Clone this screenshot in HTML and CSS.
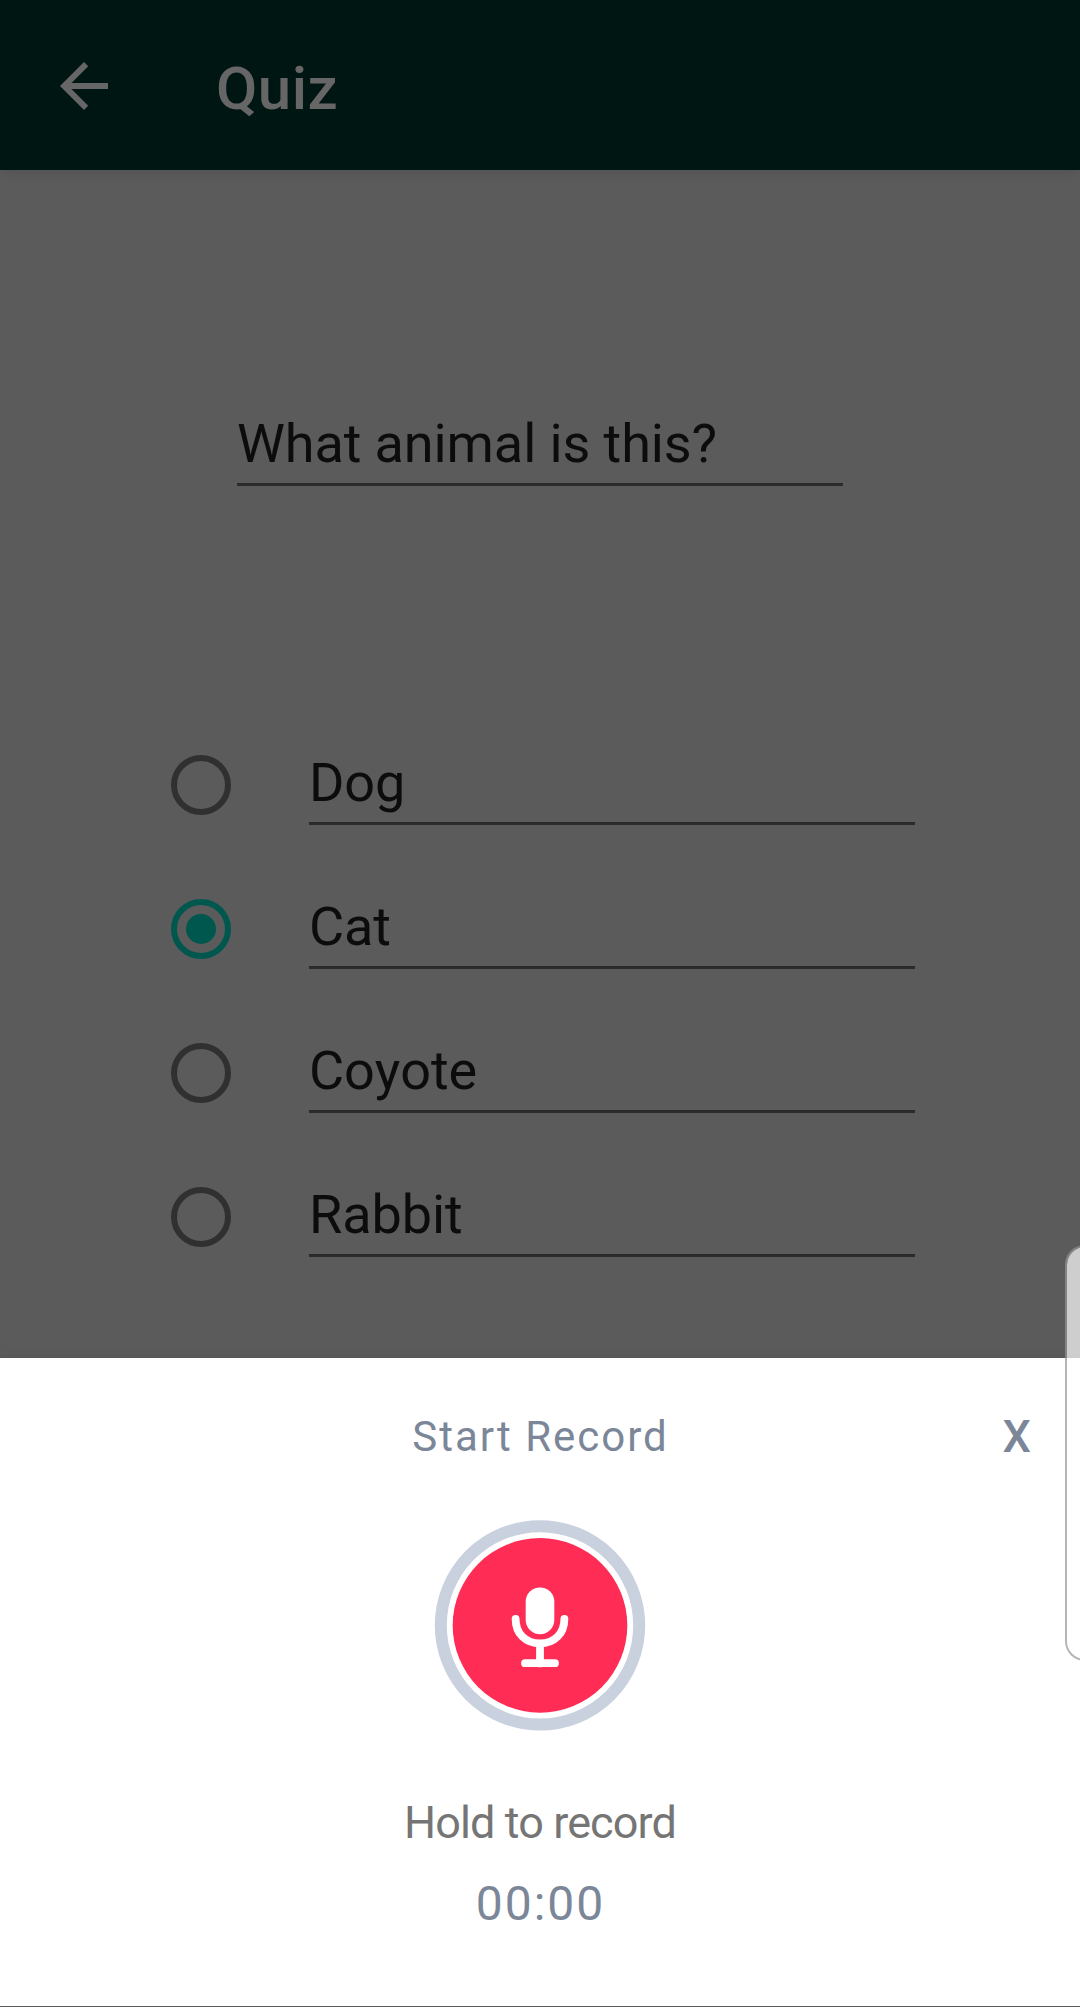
FILE: index.html
```html
<!DOCTYPE html>
<html lang="en">
<head>
<meta charset="utf-8">
<title>Quiz</title>
<link rel="stylesheet" href="styles.css">
</head>
<body>
<div class="screen">
  <header class="app-bar">
    <svg class="back" viewBox="0 0 24 24" aria-label="Back"><path d="M20 11H7.83l5.59-5.59L12 4l-8 8 8 8 1.41-1.41L7.83 13H20v-2z"/></svg>
    <h1 class="title">Quiz</h1>
  </header>
  <main class="quiz">
    <div class="field question">What animal is this?</div>
    <div class="options">
      <div class="option"><span class="radio"></span><div class="field">Dog</div></div>
      <div class="option"><span class="radio checked"></span><div class="field">Cat</div></div>
      <div class="option"><span class="radio"></span><div class="field">Coyote</div></div>
      <div class="option"><span class="radio"></span><div class="field">Rabbit</div></div>
    </div>
  </main>
  <section class="sheet">
    <div class="sheet-head">
      <h2 class="sheet-title">Start Record</h2>
      <span class="close">X</span>
    </div>
    <svg class="mic" viewBox="0 0 212 212" aria-label="Record">
      <circle cx="106" cy="105.4" r="99.2" fill="#fff" stroke="#c9d1de" stroke-width="12"/>
      <circle cx="106" cy="105.4" r="87.3" fill="#ff2d55"/>
      <rect x="91.7" y="67.4" width="28.6" height="46.8" rx="14.3" fill="#fff"/>
      <path d="M81.600 98.900C81.600 113.900 92 123.400 106 123.400s24.400-9.500 24.400-24.500M106 123.400v20M91 143.200h30" fill="none" stroke="#fff" stroke-width="7.800" stroke-linecap="round"/>
    </svg>
    <p class="hint">Hold to record</p>
    <p class="timer">00:00</p>
  </section>
  <div class="edge-handle"></div>
</div>
</body>
</html>
```
FILE: styles.css
```css
* { box-sizing: border-box; }
body { margin: 0; font-family: Roboto, "Liberation Sans", sans-serif; }
h1, h2, p { margin: 0; font-weight: 400; }

.screen {
  position: relative;
  display: flex;
  flex-direction: column;
  width: 1080px;
  height: 2007px;
  overflow: hidden;
  background: #5b5b5b;
}

.app-bar {
  display: flex;
  align-items: center;
  gap: 96px;
  height: 170px;
  padding: 2px 48px 0;
  background: #001613;
  box-shadow: 0 1px 12px rgba(0, 0, 0, .12);
}
.back { width: 72px; height: 72px; fill: #666; }
.title { margin-top: 5px; font-size: 60px; font-weight: 500; line-height: 70px; letter-spacing: .5px; color: #666; }

.quiz { height: 1188px; padding-top: 241px; }
.field {
  width: 606px;
  height: 75px;
  padding: 1px 0 7px;
  border-bottom: 3px solid #2b2b2b;
  font-size: 54px;
  line-height: 64px;
  letter-spacing: -.1px;
  font-kerning: none;
  color: #0c0c0c;
}
.question { margin-left: 237px; }
.options { display: flex; flex-direction: column; gap: 69px; margin: 264px 0 0 171px; }
.option { display: flex; align-items: center; gap: 78px; height: 75px; }
.option .radio { margin-bottom: 5px; }
.radio {
  display: flex;
  align-items: center;
  justify-content: center;
  width: 60px;
  height: 60px;
  border: 6px solid #303030;
  border-radius: 50%;
}
.radio.checked { border-color: #00574e; }
.radio.checked::after { content: ""; width: 30px; height: 30px; border-radius: 50%; background: #00574e; }

.sheet {
  display: flex;
  flex-direction: column;
  align-items: center;
  height: 649px;
  padding-top: 49px;
  background: #fff;
  border-bottom: 1px solid #5b5b5b;
  box-shadow: 0 0 10px rgba(0, 0, 0, .08);
}
.sheet-head {
  display: grid;
  grid-template-columns: 1fr auto 1fr;
  align-items: center;
  width: 100%;
  height: 60px;
  padding: 0 49px;
  color: #7b8798;
}
.sheet-title { grid-column: 2; padding-left: 1px; font-size: 42px; line-height: 60px; letter-spacing: 2px; }
.close { justify-self: end; font-size: 45px; font-weight: 500; line-height: 60px; }
.mic { width: 212px; height: 212px; margin-top: 53px; }
.hint { margin-top: 61px; font-size: 45px; line-height: 60px; letter-spacing: -.9px; color: #757575; }
.timer { margin-top: 21px; padding-left: 1px; font-size: 48px; line-height: 60px; letter-spacing: 2px; color: #7b8798; }

/* System edge panel handle floating over the right side */
.edge-handle {
  position: absolute;
  top: 1245px;
  right: -30px;
  width: 45px;
  height: 416px;
  border: 2px solid rgba(150, 150, 150, .7);
  border-radius: 20px;
  background: rgba(255, 255, 255, .7);
  background-clip: padding-box;
}
```
